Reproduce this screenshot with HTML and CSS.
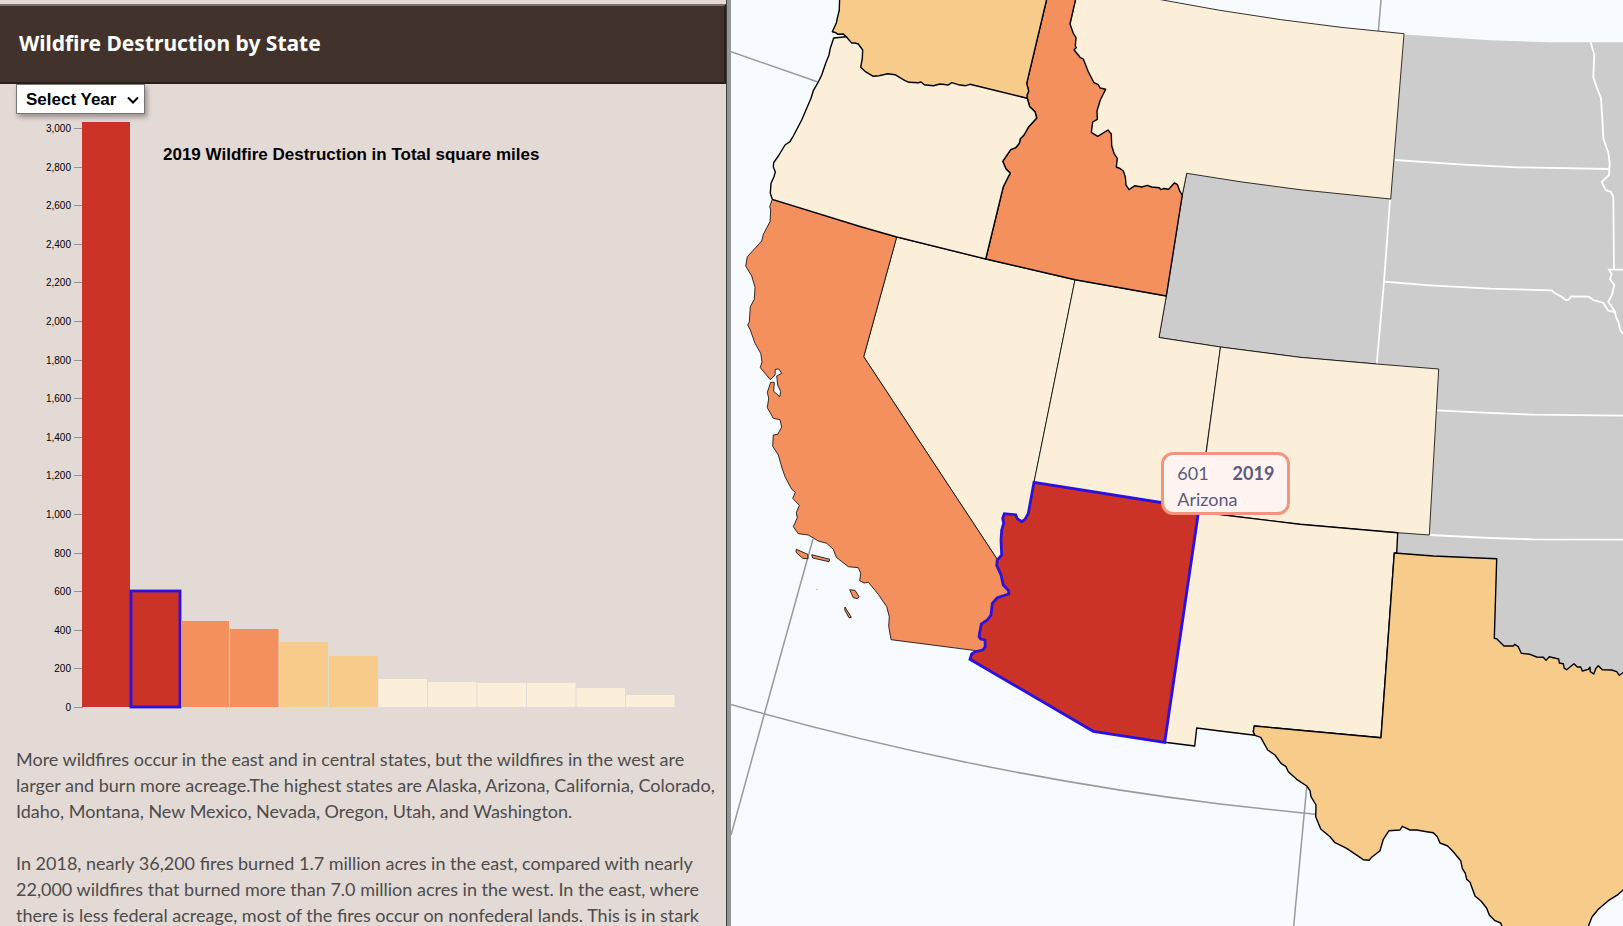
FILE: index.html
```html
<!DOCTYPE html>
<html lang="en">
<head>
<meta charset="utf-8">
<title>Wildfire Destruction by State</title>
<link rel="stylesheet" href="styles.css">
</head>
<body>
<div class="layout">
  <section class="panel">
    <header class="panel-header"><h1>Wildfire Destruction by State</h1></header>
    <div class="panel-body">
      <div class="year-picker">
        <select class="year-select" aria-label="Select Year">
          <option>Select Year</option>
          <option>2019</option>
          <option>2018</option>
        </select>
        <svg class="chevron" viewBox="0 0 12 8" aria-hidden="true"><path d="M1 1.500L6 6.500L11 1.500"/></svg>
      </div>
      <svg class="chart" viewBox="0 0 700 610" preserveAspectRatio="xMinYMin meet" role="img" aria-label="2019 Wildfire Destruction in Total square miles">
        <g class="axis">
          <path d="M82.5 9V594M74 14.5h8M74 53.5h8M74 91.5h8M74 130.500h8M74 168.500h8M74 207.500h8M74 246.500h8M74 284.500h8M74 323.500h8M74 361.500h8M74 400.500h8M74 439.500h8M74 477.500h8M74 516.500h8M74 554.500h8M74 593.500h8"/>
          <text x="71" y="18">3,000</text><text x="71" y="57">2,800</text><text x="71" y="95">2,600</text><text x="71" y="134">2,400</text>
          <text x="71" y="172">2,200</text><text x="71" y="211">2,000</text><text x="71" y="250">1,800</text><text x="71" y="288">1,600</text>
          <text x="71" y="327">1,400</text><text x="71" y="365">1,200</text><text x="71" y="404">1,000</text><text x="71" y="443">800</text>
          <text x="71" y="481">600</text><text x="71" y="520">400</text><text x="71" y="558">200</text><text x="71" y="597">0</text>
        </g>
        <g class="tier-4"><rect x="82" y="8" width="48" height="585"/><rect class="selected" x="131" y="477" width="49" height="116"/></g>
        <g class="tier-3"><rect x="181" y="507" width="48" height="86"/><rect x="230" y="515" width="48.500" height="78"/></g>
        <g class="tier-2"><rect x="279.500" y="528" width="48.500" height="65"/><rect x="329" y="542" width="49" height="51"/></g>
        <g class="tier-1"><rect x="378.500" y="565" width="48.500" height="28"/><rect x="428" y="568" width="48.500" height="25"/><rect x="477.500" y="569" width="48.500" height="24"/><rect x="527" y="569" width="48.500" height="24"/><rect x="576.500" y="574" width="48.500" height="19"/><rect x="626" y="581" width="48.500" height="12"/></g>
        <text class="chart-title" x="163" y="46">2019 Wildfire Destruction in Total square miles</text>
      </svg>
      <div class="story">
        <p>More wildfires occur in the east and in central states, but the wildfires in the west are larger and burn more acreage.The highest states are Alaska, Arizona, California, Colorado, Idaho, Montana, New Mexico, Nevada, Oregon, Utah, and Washington.</p>
        <p>In 2018, nearly 36,200 fires burned 1.7 million acres in the east, compared with nearly 22,000 wildfires that burned more than 7.0 million acres in the west. In the east, where there is less federal acreage, most of the fires occur on nonfederal lands. This is in stark</p>
      </div>
    </div>
  </section>
  <main class="map-pane">
    <svg class="map" viewBox="731 0 892 926" preserveAspectRatio="xMinYMin slice" role="img" aria-label="Map of western states">
      <path class="graticule" d="M731 51.700L818 82M813 539L779.300 660L731 835M731 704.500Q840 736 960 761Q1090 788 1220 804L1315 814.300M1306.700 787L1293.700 926M1381 0L1378.300 32"/>
      <path class="land" d="M1186 173L1300 189L1390 199L1404 34.500L1490 40.300L1550 42.300L1623 42.300H1640V690H1380V400L1159 337.500Z"/>
      <g class="borders">
        <path d="M1395 160L1463 164.700L1516.700 167.300L1609.300 169M1390 200L1384 281.700L1376.700 364M1384 281.700L1430 285.300L1490 288.700L1551.700 290.300L1555 293.300L1561.700 296.700L1566 300.300L1569 299.300L1571 296.300L1588.700 296.700L1593.300 300L1603.300 303L1608.300 310.700L1615 312L1616 317L1618.300 321.700L1620.300 330L1625 336"/>
        <path d="M1590.700 42.300L1594.300 55L1593.300 77.300L1597 88L1601 98.300L1602.700 125L1603.300 138.300L1608.300 152.700L1609.700 163.300L1609 175L1601.700 182L1605.700 190L1611 192L1613.300 196.700L1614 269.300M1625 269.700H1609L1611.700 274L1610 279.300L1614.300 285L1612 295L1608.300 301.700L1612.700 308.300L1615 312M1437 410.300L1483.300 412.700L1533.300 414.700L1623 415.700M1429.300 535L1490 538L1533.300 539.300L1623 539.700"/>
      </g>
      <path class="outline-thin" d="M1186.700 173.300L1182.300 195L1166.300 296L1159 337.500L1220.500 347L1300 357.300L1376.700 364"/>
      <g class="tier-1 state thin">
        <path d="M1075.700 -1L1070 24L1065 50L1085 95L1085 140L1105 145L1115 180L1129 195L1176 195L1182.300 195L1186.700 173.300L1240 181.700L1300 189.700L1390.700 199L1404 33.700Q1280 22.800 1157 -1V-5H1076Z"/>
        <path d="M896.700 237L985.700 259L1075 279.700L1034 482.300L1030 530L1006 562L997 559L863.700 356.700Z"/>
        <path d="M1075 279.700L1166.300 296L1159 337.500L1220.500 347L1198.300 508L1034 482.300Z"/>
        <path d="M1220.500 347L1300 357.300L1376.700 364L1438.700 369L1429.300 535L1397.700 532.700L1300 524.300L1221.700 514.700L1198.300 511Z"/>
      </g>
      <g class="tier-3 state thin">
        <path d="M772.300 199.300L769.700 206.700L770.700 210L770 221.700L763.300 234.300L761.700 241L747.300 256.700L745.700 266L751.700 276L755 287.300L754.300 299.300L750.300 306.700L749.300 321.700L747.700 325L750.300 330L755 343.300L760.700 353.300L762 361.700L760.300 367.700L770.300 379.700L775 375L775.300 369.300L778.700 369L781.700 373.300L776.700 376L777.700 385L780.700 391.700L779.700 396.700L773.700 391.300L774.300 382.300L770.700 382.300L767.300 392.300L768.700 398.300L767.300 407.700L773.300 418.300L780 419.700L781.700 427L777.700 434.300L773.300 435L772.700 446.300L778.300 455L782 468L785 476.700L791.700 489.300L795.300 492.300L792.700 498.300L799.300 505.300L796.300 512.700L797.300 517.700L793.300 526.700L798.300 533.700L808.300 535L818.300 541L826.700 543.300L833.300 549.300L836.300 557.300L848.300 566.700L858.300 567.700L860.700 573.300L859.700 580.700L864 583L868.300 582.300L878.300 594.300L886.700 606.700L889.300 616.700L888.700 626L891 639.700L973.300 650.300L990 655L1000 640L1015 600L1010 570L997 559L863.700 356.700L896.700 237Z"/>
        <path d="M796.300 549.300L807.700 554.300L808 558.700L802.700 558.300L796 552.300ZM811.700 554.700L829.700 559.300L829 561.700L812.700 558ZM849.700 589.700L855 590.300L859 596.700L857.700 598.700L853.300 597.700ZM845 607L851.300 617.300L849 617.700L844.700 610Z"/>
        <path d="M817 589.500v.5"/>
      </g>
      <g class="tier-1 state">
        <path d="M1198.300 511L1221.700 514.700L1300 524.300L1397.700 532.700L1396.700 553L1394.300 553L1381 737.700L1254.300 726L1253.300 731.700L1255 735.300L1220 731L1196.700 728L1194.700 746L1164.700 742.300Z"/>
      </g>
      <g class="tier-3 state">
        <path d="M1047.700 -5L1026.700 83.300L1028.700 91.300L1027 95L1027.300 98.300L1029.700 106.700L1035 111.700L1036.700 118L1028.300 127.300L1024 135L1020.300 138.700L1019.300 143.300L1015.700 147.700L1010.700 149.700L1002.700 161.300L1006 169L1010.300 173.300L1008.300 176.700L1003.300 186.700L985.700 259L1075 279.700L1166.300 296L1182.300 195L1180 191.700L1177.300 184.300L1174.300 183L1168.700 189.300L1164 188.500L1160.700 189.700L1159.300 187.700L1151.700 187L1147.300 185.300L1141.700 187L1135 185.700L1129 189.700L1126 185L1125.300 176.700L1123.300 171L1120 168.500L1116.300 167L1117.300 158.300L1114 153.300L1111.700 145.700L1111.300 134L1108 130L1097.700 136.300L1091.300 132.300L1092.700 122L1097.300 119.300L1097 111L1100.300 100L1105.700 89.300L1100 88L1098.300 84.700L1094 82.700L1088.300 71.700L1083.300 59L1080 57.300L1074 49.700L1076.300 47.700L1075.300 45.700L1076 37.700L1073.300 33.300L1070 24L1075.700 -1Z"/>
      </g>
      <g class="tier-1 state">
        <path d="M846.300 36.700L833.700 38L830.300 48.300L829 55L825.700 63.300L821.700 75L818.300 82L813.300 90.700L811 98.300L801.700 120L793.300 136L790 141.700L785 145L779 155L773.700 162.700L773.300 166.700L775.300 172L774 176.700L771 183.300L770.300 193.300L772.300 199.300L860 226.500L896.700 237L985.700 259L1003.300 186.700L1008.300 176.700L1010.300 173.300L1006 169L1002.700 161.300L1010.700 149.700L1015.700 147.700L1019.300 143.300L1020.300 138.700L1024 135L1028.300 127.300L1036.700 118L1035 111.700L1029.700 106.700L1027.300 98.300L900 60Z"/>
      </g>
      <g class="tier-2 state">
        <path d="M839.700 -5L839.300 10L837.300 18.300L836.300 23L832.300 31.700L836 32.700L837.700 34.300L843.300 34L846.300 36.700L851.700 43L855 43L858.300 44L862.700 50L862.300 58.300L860.700 67.300L865 71.300L873.300 76.300L879 75.700L887.700 73.700L895 74.700L905 80.700L909 82.300L918.300 82.700L921 82L924.300 84.700L933.300 85.700L940 84L948.300 85L951.700 82.700L958.300 84.700L965.700 85.700L970 84.300L1027.300 98.300L1027 95L1028.700 91.300L1026.700 83.300L1047.700 -5Z"/>
        <path d="M1394.300 553L1433.300 556L1496.700 558.700L1494.300 638.300L1496.700 638.700L1504 646L1513.300 646L1514.700 644.300L1518.300 646.700L1521.300 653.300L1530 654.300L1536.700 657L1543.300 657.300L1546 660.300L1549.300 656.700L1558.700 659L1559.300 663L1563.300 663.700L1564.300 668.300L1566.700 669.700L1574 663.700L1577.300 667L1580.700 667L1582.300 671L1588.300 669.300L1590 667.300L1590.300 671.700L1593.700 674L1596 668.300L1598.300 665.700L1602.300 669.700L1611.700 670L1616.700 671.700L1619.300 675.300L1623 672.700H1630V886L1623 890L1618.300 894.300L1608.300 900.700L1598.300 909.300L1592 917L1586 932H1504L1500.700 923L1495 920.700L1489.300 915L1486.700 908.300L1481 901L1475 896L1470 882.300L1466.700 879.300L1465.300 873.300L1462.300 868.300L1460.700 860.700L1453.300 851.700L1447.700 846L1440 843L1437.300 836.700L1433.300 832.700L1426.700 831.700L1416.700 830L1410 830L1402.300 826.300L1400 830L1389 830.700L1383.300 839.300L1380 850.700L1371.700 857.300L1369 860.300L1363.300 859.700L1346.700 848.300L1335 842.700L1330 836.700L1320.700 829L1315.700 816.700L1316 805L1311 796.700L1310 790.700L1306.700 786L1296.700 779.300L1288.300 771.700L1286 766.700L1281 763.300L1275 755L1267.700 750L1260.700 737.300L1255 735.300L1253.300 731.700L1254.300 726L1381 737.700Z"/>
      </g>
      <g class="tier-4">
        <path class="selected" d="M1034 482.300L1028.300 513.300L1025 519.300L1021.700 521.700L1017.300 518.700L1015.700 514.700L1004.300 513.700L1002.700 518.300L1003.700 523.300L1001.700 530L1001 540L1001.700 555L997.300 560L996.700 565.300L1001 575L1003.300 585L1008.700 590.700L1008.700 594L997.300 597.700L992.300 603.300L991 615L987.300 620L981.300 624L979 636.700L980.700 639L985 640L985.300 646.700L982.700 650L975 651.700L971.700 654L970 659.300L1093.300 731.300L1164.700 742.300L1199 508.500Z"/>
      </g>
    </svg>
    <div class="tooltip" role="status">
      <div class="tooltip-row"><span>601</span><strong>2019</strong></div>
      <div>Arizona</div>
    </div>
  </main>
</div>
</body>
</html>
```
FILE: styles.css
```css
* { box-sizing: border-box; }
body {
  margin: 0;
  color: #4c4c4c;
  font-family: Lato, "Open Sans", sans-serif;
  font-size: 18px;
  line-height: 26px;
}
.layout {
  display: grid;
  grid-template-columns: calc(45% + 1px) 1fr;
  height: 100vh;
  overflow: hidden;
}
.panel {
  min-width: 0;
  padding-top: 4px;
  overflow: hidden;
  background: #e3d9d5;
  border-right: 4px solid #929694;
  box-shadow: inset -1px 0 #3c3c3c;
}
.panel-header {
  padding: 22px 19px 24px;
  margin-right: 1px;
  background: #41332b;
  border: solid #2a1f1b;
  border-width: 2px 2px 2px 0;
  border-top-color: #7c7068;
}
.panel-header h1 {
  margin: 0;
  color: #fff;
  font-family: "Noto Sans", "Open Sans", sans-serif;
  font-size: 21px;
  font-weight: 700;
  line-height: 30px;
}
.panel-body {
  display: flex;
  flex-direction: column;
  align-items: flex-start;
}
.year-picker {
  position: relative;
  width: 129px;
  height: 30px;
  margin-left: 16px;
}
.year-select {
  width: 100%;
  height: 100%;
  padding: 0 24px 0 9px;
  color: #000;
  background: #fff;
  border: 1px solid #767676;
  border-radius: 0;
  box-shadow: 2px 3px 5px rgba(0, 0, 0, .35);
  font: 700 17px "Liberation Sans", Arial, sans-serif;
  appearance: none;
}
.chevron {
  position: absolute;
  top: 12px;
  right: 6px;
  width: 12px;
  height: 8px;
  fill: none;
  stroke: #000;
  stroke-width: 2;
  pointer-events: none;
}
.chart {
  width: 100%;
  height: 610px;
}
.axis path { fill: none; stroke: #929292; }
.axis text { font: 10px "Liberation Sans", Arial, sans-serif; text-anchor: end; }
.chart-title { font: 700 17px "Liberation Sans", Arial, sans-serif; }
.story { padding: 22px 4px 22px 16px; }
.story p { margin: 0 0 26px; }
.map-pane {
  position: relative;
  min-width: 0;
  overflow: hidden;
  background: #f7faff;
}
.map { display: block; width: 100%; height: 100%; }
.graticule { fill: none; stroke: #999; stroke-width: 1.5; }
.land { fill: #ccc; }
.borders { fill: none; stroke: #fff; stroke-width: 1.8; }
.outline-thin { fill: none; stroke: #000; stroke-width: .7; }
.tier-1 { fill: #fcefd9; }
.tier-2 { fill: #f7cc8b; }
.tier-3 { fill: #f4905d; }
.tier-4 { fill: #cb3228; }
.state { stroke: #000; stroke-width: 1.4; stroke-linejoin: round; }
.thin { stroke-width: .8; }
.selected { stroke: #2a12dc; stroke-width: 2.800; }
.tooltip {
  position: absolute;
  top: 452px;
  left: 430px;
  width: 129px;
  padding: 5px 13px 0;
  color: #5c5a7d;
  background: #fff4f1;
  border: 3px solid #f1957f;
  border-radius: 12px;
}
.tooltip-row { display: flex; justify-content: space-between; }
```
